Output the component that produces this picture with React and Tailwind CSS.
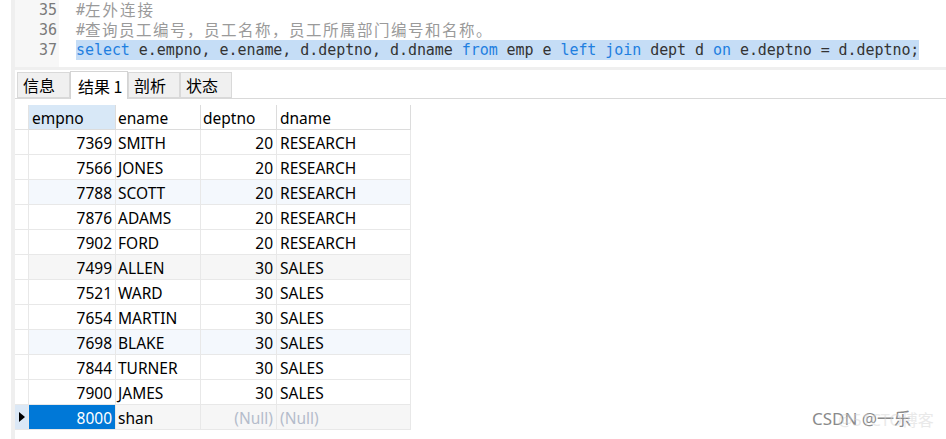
import React from "react";

const mono = { fontFamily: '"DejaVu Sans Mono", "Liberation Mono", "Noto Sans CJK SC", monospace' };
const ui = { fontFamily: '"Noto Sans", "Noto Sans CJK SC", sans-serif' };
const cjk = { fontFamily: '"Noto Sans CJK SC", sans-serif' };

const rows = [
    { empno: 7369, ename: "SMITH", deptno: 20, dname: "RESEARCH" },
    { empno: 7566, ename: "JONES", deptno: 20, dname: "RESEARCH" },
    { empno: 7788, ename: "SCOTT", deptno: 20, dname: "RESEARCH", tint: "blue" },
    { empno: 7876, ename: "ADAMS", deptno: 20, dname: "RESEARCH" },
    { empno: 7902, ename: "FORD", deptno: 20, dname: "RESEARCH" },
    { empno: 7499, ename: "ALLEN", deptno: 30, dname: "SALES", tint: "grey" },
    { empno: 7521, ename: "WARD", deptno: 30, dname: "SALES" },
    { empno: 7654, ename: "MARTIN", deptno: 30, dname: "SALES" },
    { empno: 7698, ename: "BLAKE", deptno: 30, dname: "SALES", tint: "blue" },
    { empno: 7844, ename: "TURNER", deptno: 30, dname: "SALES" },
    { empno: 7900, ename: "JAMES", deptno: 30, dname: "SALES" },
    { empno: 8000, ename: "shan", deptno: null, dname: null, tint: "grey", current: true },
];

function Kw({ children }) {
    return <span className="text-[#1f7fe0]">{children}</span>;
}

function Tab({ label, active, w }) {
    return active ? (
        <div className={`${w} h-[28px] pl-[7px] flex items-center bg-white border border-b-0 border-[#d4d4d4] text-[16px] text-black relative top-[1px]`}>
            {label}
        </div>
    ) : (
        <div className={`${w} h-[26px] pl-[5px] flex items-center bg-[#f0f0f0] border border-[#d9d9d9] text-[16px] text-black`}>
            {label}
        </div>
    );
}

const cell = "h-[25px] leading-[26px] overflow-hidden border-r border-b";

export default function App() {
    return (
        <div className="w-[946px] h-[439px] bg-white flex overflow-hidden relative" style={ui}>
            <div className="w-[11px] shrink-0" />
            <div className="w-[4px] shrink-0 bg-[#efefef]" />
            <div className="flex-1 flex flex-col min-w-0">
                {/* editor */}
                <div className="h-[67px] flex">
                    <div className="w-[44px] bg-[#f7f7f7] text-right pr-[2px] text-[#7a7a7a] text-[15px] leading-[20px]" style={mono}>
                        <div className="h-[20px]">35</div>
                        <div className="h-[20px]">36</div>
                        <div className="h-[20px]">37</div>
                    </div>
                    <div className="flex-1 pl-[17px] leading-[20px] text-[15px] tracking-[-0.06px] text-[#333] whitespace-pre" style={mono}>
                        <div className="h-[20px] text-[#9a9a9a]">
                            #<span className="inline-block h-[20px] leading-[18px] align-top text-[15.5px] tracking-[2px]" style={cjk}>左外连接</span>
                        </div>
                        <div className="h-[20px] text-[#9a9a9a]">
                            #<span className="inline-block h-[20px] leading-[18px] align-top text-[15.5px] tracking-[1.5px]" style={cjk}>查询员工编号，员工名称，员工所属部门编号和名称。</span>
                        </div>
                        <div className="h-[20px] w-fit bg-[#c5ddf6]">
                            <Kw>select</Kw> e.empno, e.ename, d.deptno, d.dname <Kw>from</Kw> emp e <Kw>left</Kw> <Kw>join</Kw> dept d <Kw>on</Kw> e.deptno = d.deptno;
                        </div>
                    </div>
                </div>
                <div className="h-[3px] bg-[#efefef]" />

                {/* tabs */}
                <div className="h-[29px] flex items-end pl-[2px] border-b border-[#d9d9d9]" style={cjk}>
                    <Tab label="信息" w="w-[53px]" />
                    <Tab label="结果 1" w="w-[58px]" active />
                    <Tab label="剖析" w="w-[52px]" />
                    <Tab label="状态" w="w-[52px]" />
                </div>

                {/* grid */}
                <div className="mt-[6px] w-fit text-[15.5px] text-black">
                    <div className="flex">
                        <div className={`w-[14px] ${cell} border-[#e3e3e3]`} />
                        <div className={`w-[87px] pl-[3px] bg-[#d8e8f7] ${cell} border-[#dcdcdc]`}>empno</div>
                        <div className={`w-[85px] pl-[2px] ${cell} border-[#dcdcdc]`}>ename</div>
                        <div className={`w-[76px] pl-[2px] ${cell} border-[#dcdcdc]`}>deptno</div>
                        <div className={`w-[134px] pl-[3px] ${cell} border-[#dcdcdc]`}>dname</div>
                    </div>
                    {rows.map((r) => {
                        const bg = r.tint === "blue" ? "bg-[#f4f8fd]" : r.tint === "grey" ? "bg-[#f6f6f6]" : "bg-white";
                        return (
                            <div key={r.empno} className={`flex ${bg}`}>
                                <div className={`w-[14px] ${cell} border-[#e8e8e8] flex items-center justify-center ${r.current ? "bg-[#dbe8f6]" : "bg-white"}`}>
                                    {r.current && (
                                        <svg width="6" height="10" viewBox="0 0 6 10">
                                            <path d="M0 0 L6 5 L0 10 Z" fill="#000" />
                                        </svg>
                                    )}
                                </div>
                                <div className={`w-[87px] pr-[3px] text-right ${cell} border-[#e8e8e8] ${r.current ? "bg-[#0078d7] text-white" : ""}`}>
                                    {r.empno}
                                </div>
                                <div className={`w-[85px] pl-[2px] ${cell} border-[#e8e8e8]`}>{r.ename}</div>
                                <div className={`w-[76px] pr-[3px] text-right ${cell} border-[#e8e8e8] ${r.deptno === null ? "text-[#b4bccb]" : ""}`}>
                                    {r.deptno === null ? "(Null)" : r.deptno}
                                </div>
                                <div className={`w-[134px] pl-[3px] ${cell} border-[#e8e8e8] ${r.dname === null ? "text-[#b4bccb]" : ""}`}>
                                    {r.dname === null ? "(Null)" : r.dname}
                                </div>
                            </div>
                        );
                    })}
                </div>
            </div>

            {/* watermark */}
            <div className="absolute left-[812px] top-[406px] text-[17px] text-[#8a8a8a] whitespace-nowrap" style={ui}>
                CSDN @一乐
            </div>
            <div className="absolute left-[838px] top-[408px] text-[16px] text-[#d4d4d4] opacity-50 whitespace-nowrap" style={ui}>
                @51CTO博客
            </div>
        </div>
    );
}
